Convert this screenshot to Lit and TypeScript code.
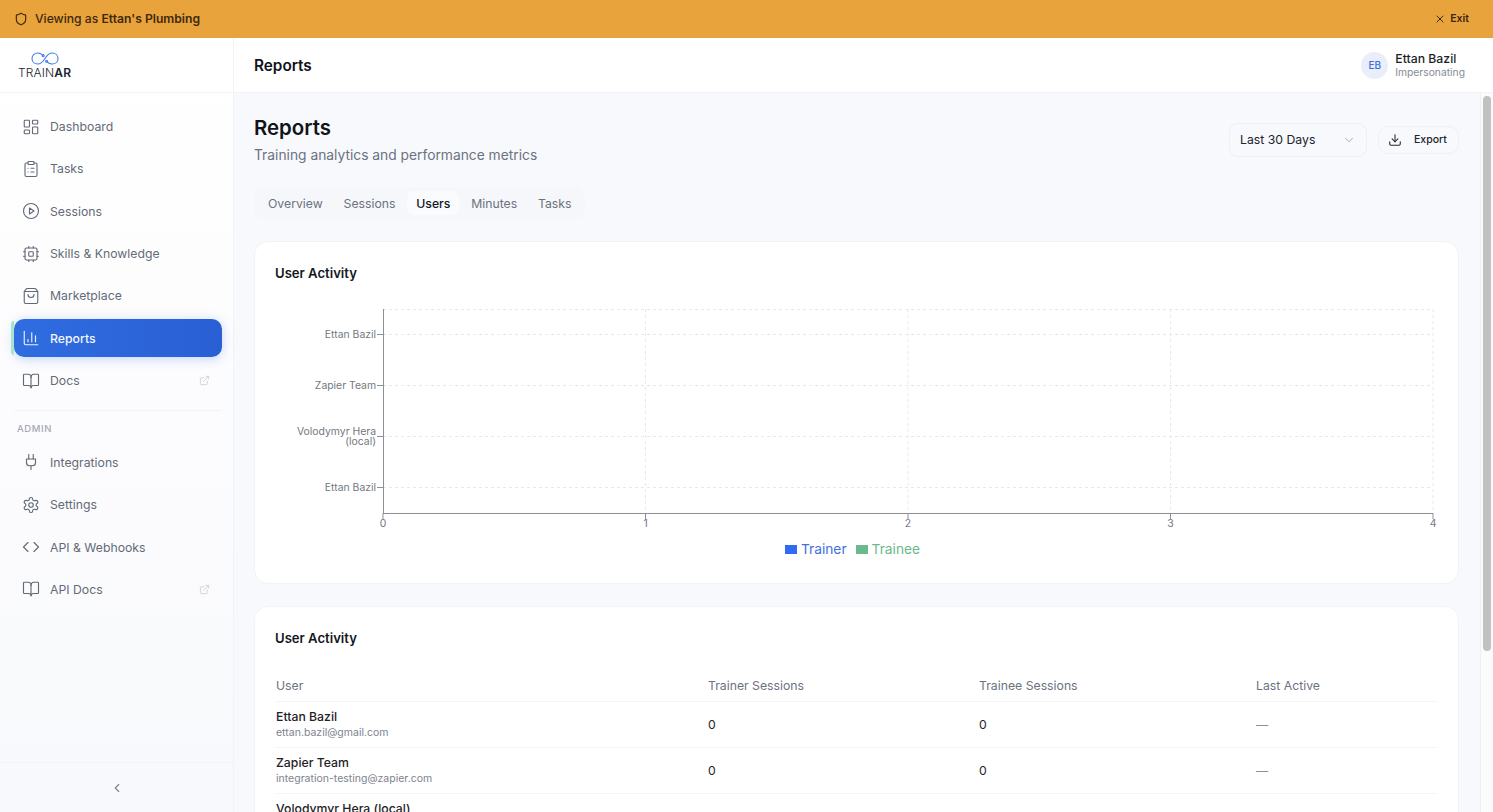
import { LitElement, html, css, svg } from "lit";
import { customElement } from "lit/decorators.js";

const icons: Record<string, any> = {
  shield: svg`<path d="M20 13c0 5-3.5 7.5-7.66 8.95a1 1 0 0 1-.67-.01C7.5 20.5 4 18 4 13V6a1 1 0 0 1 1-1c2 0 4.5-1.2 6.24-2.72a1.17 1.17 0 0 1 1.52 0C14.51 3.81 17 5 19 5a1 1 0 0 1 1 1z"/>`,
  x: svg`<path d="M18 6 6 18"/><path d="m6 6 12 12"/>`,
  dashboard: svg`<rect width="7" height="9" x="3" y="3" rx="1"/><rect width="7" height="5" x="14" y="3" rx="1"/><rect width="7" height="9" x="14" y="12" rx="1"/><rect width="7" height="5" x="3" y="16" rx="1"/>`,
  tasks: svg`<rect width="8" height="4" x="8" y="2" rx="1"/><path d="M16 4h2a2 2 0 0 1 2 2v14a2 2 0 0 1-2 2H6a2 2 0 0 1-2-2V6a2 2 0 0 1 2-2h2"/><path d="M12 11h4"/><path d="M12 16h4"/><path d="M8 11h.01"/><path d="M8 16h.01"/>`,
  play: svg`<circle cx="12" cy="12" r="10"/><polygon points="10 8 16 12 10 16 10 8"/>`,
  cpu: svg`<rect width="16" height="16" x="4" y="4" rx="2"/><rect width="6" height="6" x="9" y="9" rx="1"/><path d="M15 2v2"/><path d="M15 20v2"/><path d="M2 15h2"/><path d="M2 9h2"/><path d="M20 15h2"/><path d="M20 9h2"/><path d="M9 2v2"/><path d="M9 20v2"/>`,
  bag: svg`<path d="M16 10a4 4 0 0 1-8 0"/><path d="M3.103 6.034h17.794"/><path d="M3.4 5.467a2 2 0 0 0-.4 1.2V20a2 2 0 0 0 2 2h14a2 2 0 0 0 2-2V6.667a2 2 0 0 0-.4-1.2l-2-2.667A2 2 0 0 0 17 2H7a2 2 0 0 0-1.6.8z"/>`,
  chart: svg`<path d="M3 3v16a2 2 0 0 0 2 2h16"/><path d="M18 17V9"/><path d="M13 17V5"/><path d="M8 17v-3"/>`,
  book: svg`<path d="M12 7v14"/><path d="M3 18a1 1 0 0 1-1-1V4a1 1 0 0 1 1-1h5a4 4 0 0 1 4 4 4 4 0 0 1 4-4h5a1 1 0 0 1 1 1v13a1 1 0 0 1-1 1h-6a3 3 0 0 0-3 3 3 3 0 0 0-3-3z"/>`,
  external: svg`<path d="M15 3h6v6"/><path d="M10 14 21 3"/><path d="M18 13v6a2 2 0 0 1-2 2H5a2 2 0 0 1-2-2V8a2 2 0 0 1 2-2h6"/>`,
  plug: svg`<path d="M12 22v-5"/><path d="M9 8V2"/><path d="M15 8V2"/><path d="M18 8v5a4 4 0 0 1-4 4h-4a4 4 0 0 1-4-4V8Z"/>`,
  gear: svg`<path d="M12.22 2h-.44a2 2 0 0 0-2 2v.18a2 2 0 0 1-1 1.73l-.43.25a2 2 0 0 1-2 0l-.15-.08a2 2 0 0 0-2.73.73l-.22.38a2 2 0 0 0 .73 2.73l.15.1a2 2 0 0 1 1 1.72v.51a2 2 0 0 1-1 1.74l-.15.09a2 2 0 0 0-.73 2.73l.22.38a2 2 0 0 0 2.73.73l.15-.08a2 2 0 0 1 2 0l.43.25a2 2 0 0 1 1 1.73V20a2 2 0 0 0 2 2h.44a2 2 0 0 0 2-2v-.18a2 2 0 0 1 1-1.73l.43-.25a2 2 0 0 1 2 0l.15.08a2 2 0 0 0 2.73-.73l.22-.39a2 2 0 0 0-.73-2.73l-.15-.08a2 2 0 0 1-1-1.74v-.5a2 2 0 0 1 1-1.74l.15-.09a2 2 0 0 0 .73-2.73l-.22-.38a2 2 0 0 0-2.73-.73l-.15.08a2 2 0 0 1-2 0l-.43-.25a2 2 0 0 1-1-1.73V4a2 2 0 0 0-2-2z"/><circle cx="12" cy="12" r="3"/>`,
  code: svg`<path d="m16 18 6-6-6-6"/><path d="m8 6-6 6 6 6"/>`,
  down: svg`<path d="m6 9 6 6 6-6"/>`,
  left: svg`<path d="m15 18-6-6 6-6"/>`,
  download: svg`<path d="M21 15v4a2 2 0 0 1-2 2H5a2 2 0 0 1-2-2v-4"/><path d="m7 10 5 5 5-5"/><path d="M12 15V3"/>`,
};

const icon = (name: string, cls = "") =>
  html`<svg class="ic ${cls}" viewBox="0 0 24 24" fill="none" stroke="currentColor" stroke-width="2" stroke-linecap="round" stroke-linejoin="round">${icons[name]}</svg>`;

const mainNav = [
  { label: "Dashboard", icon: "dashboard" },
  { label: "Tasks", icon: "tasks" },
  { label: "Sessions", icon: "play" },
  { label: "Skills & Knowledge", icon: "cpu" },
  { label: "Marketplace", icon: "bag" },
  { label: "Reports", icon: "chart", active: true },
  { label: "Docs", icon: "book", external: true },
];
const adminNav = [
  { label: "Integrations", icon: "plug" },
  { label: "Settings", icon: "gear" },
  { label: "API & Webhooks", icon: "code" },
  { label: "API Docs", icon: "book", external: true },
];
const tabs = ["Overview", "Sessions", "Users", "Minutes", "Tasks"];
const users = [
  { name: "Ettan Bazil", email: "ettan.bazil@gmail.com" },
  { name: "Zapier Team", email: "integration-testing@zapier.com" },
  { name: "Volodymyr Hera (local)", email: "volodymyr@trainar.local" },
];

// chart sits on a free canvas, coords are relative to the svg
const W = 1162;
const X0 = 108;
const X1 = 1158;
const YTOP = 9;
const YBOT = 213;
const xTicks = [0, 1, 2, 3, 4];
const yTicks = [
  { y: 34, lines: ["Ettan Bazil"] },
  { y: 85, lines: ["Zapier Team"] },
  { y: 136, lines: ["Volodymyr Hera", "(local)"] },
  { y: 187, lines: ["Ettan Bazil"] },
];

@customElement("app-root")
export class AppRoot extends LitElement {
  static styles = css`
    :host {
      display: flex;
      flex-direction: column;
      height: 812px;
      overflow: hidden;
      font-family: Inter, "Liberation Sans", sans-serif;
      color: #111318;
      background: #f8f9fc;
    }
    .ic {
      width: 16px;
      height: 16px;
      flex: none;
      display: block;
    }
    .banner {
      flex: none;
      height: 38px;
      background: #e8a33c;
      color: #40290a;
      display: flex;
      align-items: center;
      justify-content: space-between;
      padding: 0 24px 1px 13.5px;
      box-sizing: border-box;
      font-size: 12.15px;
      font-weight: 500;
    }
    .banner-left {
      display: flex;
      align-items: center;
      gap: 7.5px;
    }
    .banner-left .ic {
      width: 14px;
      height: 14px;
      stroke-width: 2;
    }
    .banner b {
      font-weight: 600;
    }
    .exit {
      display: flex;
      align-items: center;
      gap: 4px;
      font-size: 10.5px;
      font-weight: 600;
    }
    .exit .ic {
      width: 12px;
      height: 12px;
      stroke-width: 2;
    }
    .body {
      flex: 1;
      min-height: 0;
      display: flex;
    }
    .sidebar {
      flex: none;
      width: 233px;
      box-sizing: content-box;
      border-right: 1px solid #f1f3f8;
      display: flex;
      flex-direction: column;
      background: linear-gradient(180deg, #ffffff 0%, #fcfcfe 50%, #f8f9fc 100%);
    }
    .logo {
      flex: none;
      height: 55px;
      box-sizing: border-box;
      border-bottom: 1px solid #f3f4f8;
      padding: 14px 0 0 18px;
      display: flex;
      flex-direction: column;
    }
    .logo svg {
      width: 28px;
      height: 13px;
      margin-left: 13px;
      display: block;
    }
    .logo-text {
      font-size: 12px;
      line-height: 14px;
      margin-top: 1px;
      color: #1d2330;
      font-weight: 300;
      letter-spacing: 0.15px;
    }
    .logo-text b {
      font-weight: 600;
    }
    .nav {
      display: flex;
      flex-direction: column;
      gap: 4px;
      padding: 0 11px 0 14px;
    }
    .nav.main {
      padding-top: 14.5px;
    }
    .item {
      height: 38.33px;
      display: flex;
      align-items: center;
      padding: 0 12px 0 8px;
      gap: 10px;
      border-radius: 10px;
      font-size: 12.25px;
      font-weight: 400;
      color: #646b78;
      position: relative;
    }
    .item .ic {
      width: 18px;
      height: 18px;
      stroke-width: 1.5;
      color: #626975;
    }
    .item .label {
      flex: 1;
    }
    .item .ic.ext {
      width: 11px;
      height: 11px;
      stroke-width: 1.7;
      color: #c6cad1;
    }
    .item.active {
      background: linear-gradient(90deg, #2f6de0, #2a5fd4);
      color: #f3f6fd;
      font-weight: 500;
      box-shadow: 0 2px 12px rgba(47, 109, 224, 0.28);
    }
    .item.active .ic {
      color: #eef3fd;
    }
    .item.active::before {
      content: "";
      position: absolute;
      left: -3.5px;
      top: 2px;
      bottom: 2px;
      width: 3.5px;
      border-radius: 4px 0 0 4px;
      background: #a9e4c8;
    }
    .divider {
      height: 1px;
      background: #f3f4f8;
      margin: 10px 11px 0 14px;
    }
    .section {
      font-size: 9.5px;
      letter-spacing: 0.6px;
      line-height: 12px;
      font-weight: 500;
      color: #a4a9b2;
      padding: 12px 0 0 17px;
      margin-bottom: 8.5px;
    }
    .collapse {
      margin-top: auto;
      height: 49px;
      border-top: 1px solid #f1f3f8;
      display: flex;
      align-items: center;
      justify-content: center;
      color: #7d838e;
    }
    .collapse .ic {
      width: 14px;
      height: 14px;
    }
    .right {
      flex: 1;
      min-width: 0;
      display: flex;
      flex-direction: column;
    }
    .topbar {
      flex: none;
      height: 55px;
      box-sizing: border-box;
      background: #fff;
      border-bottom: 1px solid #f3f4f8;
      display: flex;
      align-items: center;
      justify-content: space-between;
      padding: 0 28px 0 20px;
    }
    .topbar h2 {
      margin: 0;
      font-size: 15.3px;
      font-weight: 600;
    }
    .who {
      display: flex;
      align-items: center;
      gap: 7px;
    }
    .avatar {
      width: 27px;
      height: 27px;
      border-radius: 50%;
      background: #e9eefa;
      color: #3b70d8;
      font-size: 10px;
      font-weight: 500;
      display: flex;
      align-items: center;
      justify-content: center;
    }
    .who-name {
      font-size: 12.25px;
      font-weight: 500;
      line-height: 14px;
      color: #1b1f27;
    }
    .who-role {
      font-size: 10.3px;
      line-height: 13px;
      color: #858b96;
    }
    .content {
      flex: 1;
      min-height: 0;
      display: flex;
    }
    .scroll {
      flex: 1;
      min-width: 0;
      overflow: hidden;
      padding: 21px 21px 20px 20px;
      box-sizing: border-box;
    }
    .scrollbar {
      flex: none;
      width: 13px;
      box-sizing: border-box;
      background: #fbfbfc;
      border-left: 1px solid #eeeff2;
      padding: 3px 2px 0;
    }
    .thumb {
      height: 555px;
      border-radius: 4px;
      background: #c1c1c1;
    }
    .head {
      display: flex;
      justify-content: space-between;
      align-items: center;
    }
    h1 {
      margin: 0;
      font-size: 20.4px;
      font-weight: 600;
      line-height: 28px;
    }
    .sub {
      margin-top: 3px;
      font-size: 13.8px;
      line-height: 20px;
      color: #6b7280;
    }
    .actions {
      display: flex;
      align-items: center;
      gap: 11px;
    }
    .select {
      width: 138px;
      height: 34px;
      box-sizing: border-box;
      border: 1px solid #eef0f3;
      border-radius: 9px;
      display: flex;
      align-items: center;
      justify-content: space-between;
      padding: 0 10px;
      font-size: 12.25px;
      color: #20242c;
    }
    .select .ic {
      width: 14px;
      height: 14px;
      stroke-width: 1.5;
      color: #9ba0a9;
    }
    .export {
      width: 81px;
      height: 28px;
      box-sizing: border-box;
      border: 1px solid #eef0f3;
      border-radius: 10px;
      display: flex;
      align-items: center;
      padding: 0 10px 0 9px;
      gap: 12px;
      font-size: 10.5px;
      font-weight: 500;
      color: #20242c;
    }
    .export .ic {
      width: 14px;
      height: 14px;
      stroke-width: 1.8;
    }
    .tabs {
      margin-top: 22px;
      display: inline-flex;
      gap: 2.75px;
      padding: 4px 5px;
      border-radius: 10px;
      background: #f6f7fa;
    }
    .tab {
      height: 24px;
      padding: 0 9px;
      display: flex;
      align-items: center;
      font-size: 12.25px;
      font-weight: 400;
      color: #6b7280;
      border-radius: 7px;
    }
    .tab.on {
      background: #fafbfd;
      color: #14171d;
      font-weight: 500;
    }
    .tabs-wrap {
      margin-bottom: 22px;
      display: flex;
    }
    .card {
      background: #fff;
      border: 1px solid #f2f3f6;
      border-radius: 14px;
      padding: 21px 20px 0;
      box-sizing: border-box;
    }
    .card + .card {
      margin-top: 22px;
    }
    .card h3 {
      margin: 0;
      font-size: 13.125px;
      font-weight: 600;
      line-height: 20px;
      color: #14171d;
    }
    .chart-card {
      height: 343px;
    }
    .chart {
      display: block;
      width: 1162px;
      height: 232px;
      margin-top: 17px;
    }
    .chart text {
      font-family: Inter, "Liberation Sans", sans-serif;
      font-size: 10.4px;
      fill: #73787f;
    }
    .legend {
      display: flex;
      justify-content: center;
      gap: 9px;
      font-size: 13.75px;
      line-height: 20px;
      margin-top: 7px;
      padding-right: 8px;
    }
    .legend span {
      display: flex;
      align-items: center;
      gap: 4px;
    }
    .swatch {
      width: 12px;
      height: 9px;
    }
    .blue {
      color: #3f72e0;
    }
    .blue .swatch {
      background: #2f6bf3;
    }
    .green {
      color: #6db98f;
    }
    .green .swatch {
      background: #6db98f;
    }
    .table-card {
      padding-bottom: 20px;
    }
    .row {
      display: grid;
      grid-template-columns: 432px 271px 277px 1fr;
      align-items: center;
      padding-left: 1px;
      border-bottom: 1px solid #f4f5f7;
      font-size: 12.25px;
      color: #1f2329;
    }
    .row.hd {
      height: 35px;
      margin-top: 19px;
      padding-top: 3px;
      box-sizing: border-box;
      color: #6b7280;
    }
    .row.data {
      height: 46px;
      box-sizing: border-box;
    }
    .name {
      font-weight: 500;
      line-height: 15px;
    }
    .email {
      font-size: 10.5px;
      line-height: 15px;
      margin-top: 1px;
      color: #7d838e;
    }
    .dash {
      color: #8a8f98;
    }
  `;

  private renderItem(item: any) {
    return html`<div class="item ${item.active ? "active" : ""}">
      ${icon(item.icon)}
      <span class="label">${item.label}</span>
      ${item.external ? icon("external", "ext") : null}
    </div>`;
  }

  private renderChart() {
    return html`<svg class="chart" viewBox="0 0 ${W} 232">
      <g stroke="#e6e8ec" stroke-dasharray="3 3" fill="none">
        ${[YTOP, ...yTicks.map((t) => t.y)].map(
          (y) => svg`<line x1=${X0} x2=${X1} y1=${y + 0.5} y2=${y + 0.5}></line>`
        )}
        ${xTicks.slice(1).map((t) => {
          const x = X0 + ((X1 - X0) * t) / 4;
          return svg`<line x1=${x} x2=${x} y1=${YTOP} y2=${YBOT}></line>`;
        })}
      </g>
      <g stroke="#8d9096" fill="none">
        <line x1=${X0 + 0.5} x2=${X0 + 0.5} y1=${YTOP} y2=${YBOT}></line>
        <line x1=${X0} x2=${X1} y1=${YBOT + 0.5} y2=${YBOT + 0.5}></line>
        ${yTicks.map(
          (t) => svg`<line x1=${X0 - 6} x2=${X0} y1=${t.y + 0.5} y2=${t.y + 0.5}></line>`
        )}
        ${xTicks.map((t) => {
          const x = X0 + ((X1 - X0) * t) / 4;
          return svg`<line x1=${x} x2=${x} y1=${YBOT} y2=${YBOT + 6}></line>`;
        })}
      </g>
      ${xTicks.map((t) => {
        const x = X0 + ((X1 - X0) * t) / 4;
        return svg`<text x=${x} y=${YBOT + 13.5} text-anchor="middle">${t}</text>`;
      })}
      ${yTicks.map((t) => {
        const top = t.y + 3.5 - (t.lines.length - 1) * 5;
        return t.lines.map(
          (l, i) => svg`<text x=${X0 - 7} y=${top + i * 10} text-anchor="end">${l}</text>`
        );
      })}
    </svg>`;
  }

  render() {
    return html`
      <div class="banner">
        <div class="banner-left">
          ${icon("shield")}
          <span>Viewing as <b>Ettan's Plumbing</b></span>
        </div>
        <div class="exit">${icon("x")}<span>Exit</span></div>
      </div>
      <div class="body">
        <aside class="sidebar">
          <div class="logo">
            <svg viewBox="0 0 28 13" fill="none" stroke="#3f7be6" stroke-width="1.1" stroke-linecap="round">
              <path d="M11.2 3C10 1.6 8.6 1 6.8 1 3.4 1 1 3.4 1 6.5S3.4 12 6.8 12c3.4 0 5.4-2.6 7.2-5.5S18 1 21.2 1C24.6 1 27 3.4 27 6.5S24.6 12 21.2 12c-2.2 0-3.8-.8-5-2.2"></path>
              <circle cx="12.2" cy="3.6" r="1"></circle>
              <circle cx="15.6" cy="9.2" r="1"></circle>
            </svg>
            <div class="logo-text">TRAIN<b>AR</b></div>
          </div>
          <div class="nav main">${mainNav.map((i) => this.renderItem(i))}</div>
          <div class="divider"></div>
          <div class="section">ADMIN</div>
          <div class="nav">${adminNav.map((i) => this.renderItem(i))}</div>
          <div class="collapse">${icon("left")}</div>
        </aside>
        <div class="right">
          <header class="topbar">
            <h2>Reports</h2>
            <div class="who">
              <div class="avatar">EB</div>
              <div>
                <div class="who-name">Ettan Bazil</div>
                <div class="who-role">Impersonating</div>
              </div>
            </div>
          </header>
          <div class="content">
            <main class="scroll">
              <div class="head">
                <div>
                  <h1>Reports</h1>
                  <div class="sub">Training analytics and performance metrics</div>
                </div>
                <div class="actions">
                  <div class="select"><span>Last 30 Days</span>${icon("down")}</div>
                  <div class="export">${icon("download")}<span>Export</span></div>
                </div>
              </div>
              <div class="tabs-wrap">
                <div class="tabs">
                  ${tabs.map((t) => html`<div class="tab ${t === "Users" ? "on" : ""}">${t}</div>`)}
                </div>
              </div>
              <section class="card chart-card">
                <h3>User Activity</h3>
                ${this.renderChart()}
                <div class="legend">
                  <span class="blue"><i class="swatch"></i>Trainer</span>
                  <span class="green"><i class="swatch"></i>Trainee</span>
                </div>
              </section>
              <section class="card table-card">
                <h3>User Activity</h3>
                <div class="row hd">
                  <div>User</div>
                  <div>Trainer Sessions</div>
                  <div>Trainee Sessions</div>
                  <div>Last Active</div>
                </div>
                ${users.map(
                  (u) => html`<div class="row data">
                    <div>
                      <div class="name">${u.name}</div>
                      <div class="email">${u.email}</div>
                    </div>
                    <div>0</div>
                    <div>0</div>
                    <div class="dash">—</div>
                  </div>`
                )}
              </section>
            </main>
            <div class="scrollbar"><div class="thumb"></div></div>
          </div>
        </div>
      </div>
    `;
  }
}
